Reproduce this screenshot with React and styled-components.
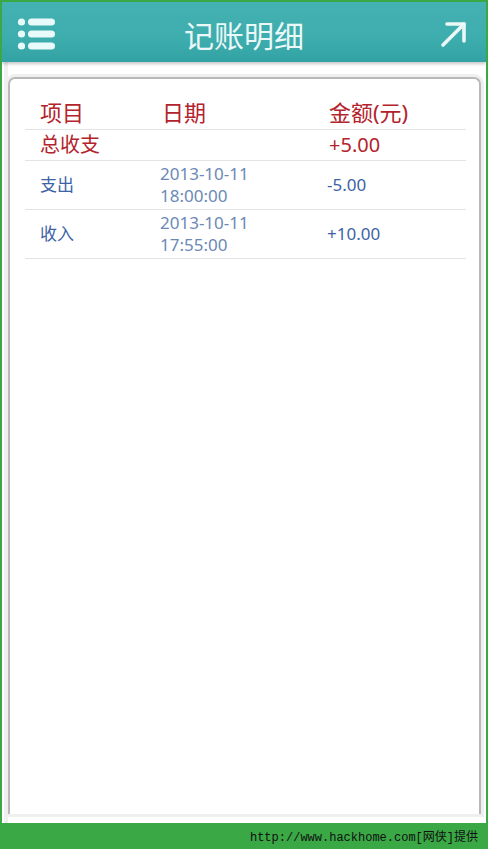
import React from "react";
import styled, { createGlobalStyle } from "styled-components";

const Global = createGlobalStyle`
  html, body { margin: 0; padding: 0; background: #fff; }
  body { font-family: "Noto Sans", "Open Sans", "Noto Sans CJK SC", sans-serif; }
  * { box-sizing: border-box; }
`;

const Frame = styled.div`
  width: 488px;
  height: 849px;
  display: flex;
  flex-direction: column;
  border: 2px solid #3aa845;
  border-bottom: none;
  background: #fff;
  overflow: hidden;
`;

const Header = styled.header`
  height: 60px;
  flex: none;
  display: flex;
  align-items: center;
  justify-content: space-between;
  padding: 4px 18px 0 14px;
  background: linear-gradient(to bottom, #44b1b2 0%, #3eadae 60%, #33a2a4 100%);
  box-shadow: 0 2px 3px rgba(0, 0, 0, 0.22);
  position: relative;
  z-index: 1;
`;

const Title = styled.h1`
  margin: 0 0 0 4px;
  font-family: "Noto Sans CJK SC", sans-serif;
  font-weight: 400;
  font-size: 30px;
  color: #eaf8f8;
  line-height: 1;
`;

const IconBox = styled.div`
  width: 40px;
  height: 40px;
  display: flex;
  align-items: center;
  justify-content: ${(p) => p.$justify || "flex-start"};
`;

const Body = styled.main`
  flex: 1;
  display: flex;
  flex-direction: column;
  padding: 15px 5px 9px 6px;
  background: linear-gradient(to right, #fff 0 2px, #f0f0f0 2px 6px, #fff 6px);
`;

const Card = styled.section`
  flex: 1;
  background: #fff;
  border: 2px solid #b9b9b9;
  border-bottom: none;
  border-radius: 7px 7px 0 0;
  box-shadow: 0 0 0 3px #efefef;
  padding: 16px 13px 0 15px;
`;

const Row = styled.div`
  display: grid;
  grid-template-columns: 122px 167px 1fr;
  align-items: center;
  padding-left: 15px;
  height: ${(p) => p.$h}px;
  border-bottom: 1px solid #e4e4e4;
  color: ${(p) => (p.$red ? "#b3232c" : "#3d63a5")};
  font-size: ${(p) => p.$size}px;
`;

const Cell = styled.div`
  font-family: "Noto Sans", "Noto Sans CJK SC", sans-serif;
  line-height: ${(p) => p.$lh || 1.2};
  margin-left: ${(p) => p.$shift || 0}px;
  color: ${(p) => p.$color || "inherit"};
  white-space: pre-line;
`;

const Footer = styled.footer`
  height: 26px;
  flex: none;
  margin: 0 -2px;
  background: #3aa845;
  display: flex;
  align-items: center;
  justify-content: flex-end;
  padding-right: 10px;
  font-family: "Liberation Mono", "Noto Sans CJK SC", monospace;
  font-size: 12px;
  color: #111;
`;

function MenuIcon() {
  return (
    <svg width="40" height="34" viewBox="0 0 40 34">
      {[4, 16, 28].map((y) => (
        <g key={y} fill="#e9fafa">
          <circle cx="5.5" cy={y + 1} r="3.6" />
          <rect x="12" y={y - 2.6} width="27" height="7.2" rx="3.6" />
        </g>
      ))}
    </svg>
  );
}

function ArrowIcon() {
  return (
    <svg width="28" height="28" viewBox="0 0 28 28">
      <g stroke="#eaf8f8" strokeWidth="3.6" strokeLinecap="round" strokeLinejoin="round" fill="none">
        <line x1="3" y1="25" x2="24" y2="4" />
        <polyline points="7,4 24,4 24,21" />
      </g>
    </svg>
  );
}

export default function App() {
  return (
    <>
      <Global />
      <Frame>
        <Header>
          <IconBox>
            <MenuIcon />
          </IconBox>
          <Title>记账明细</Title>
          <IconBox $justify="flex-end">
            <ArrowIcon />
          </IconBox>
        </Header>
        <Body>
          <Card>
            <Row $red $h={35} $size={22}>
              <Cell>项目</Cell>
              <Cell>日期</Cell>
              <Cell>金额(元)</Cell>
            </Row>
            <Row $red $h={31} $size={20}>
              <Cell>总收支</Cell>
              <Cell />
              <Cell>+5.00</Cell>
            </Row>
            <Row $h={49} $size={17}>
              <Cell>支出</Cell>
              <Cell $lh={1.3} $shift={-2} $color="#6b89b6">{"2013-10-11\n18:00:00"}</Cell>
              <Cell $shift={-2}>-5.00</Cell>
            </Row>
            <Row $h={49} $size={17}>
              <Cell>收入</Cell>
              <Cell $lh={1.3} $shift={-2} $color="#6b89b6">{"2013-10-11\n17:55:00"}</Cell>
              <Cell $shift={-2}>+10.00</Cell>
            </Row>
          </Card>
        </Body>
        <Footer>http://www.hackhome.com[网侠]提供</Footer>
      </Frame>
    </>
  );
}
